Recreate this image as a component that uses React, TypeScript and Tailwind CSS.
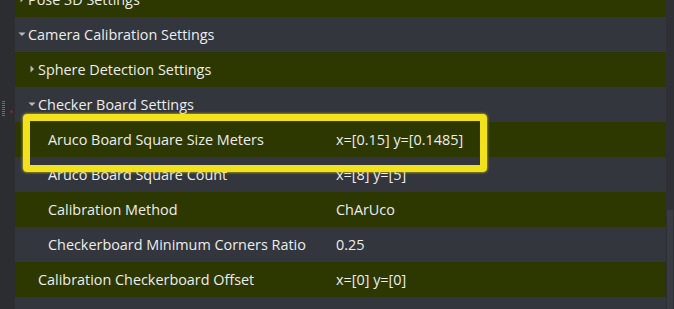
import React from "react";

type Row = {
  label: string;
  value?: string;
  level: number;
  arrow?: "open" | "closed";
  tone: "green" | "gray";
};

const rows: Row[] = [
  { label: "Pose 3D Settings", level: 0, arrow: "closed", tone: "green" },
  { label: "Camera Calibration Settings", level: 0, arrow: "open", tone: "gray" },
  { label: "Sphere Detection Settings", level: 1, arrow: "closed", tone: "green" },
  { label: "Checker Board Settings", level: 1, arrow: "open", tone: "gray" },
  { label: "Aruco Board Square Size Meters", value: "x=[0.15] y=[0.1485]", level: 2, tone: "green" },
  { label: "Aruco Board Square Count", value: "x=[8] y=[5]", level: 2, tone: "gray" },
  { label: "Calibration Method", value: "ChArUco", level: 2, tone: "green" },
  { label: "Checkerboard Minimum Corners Ratio", value: "0.25", level: 2, tone: "gray" },
  { label: "Calibration Checkerboard Offset", value: "x=[0] y=[0]", level: 1, tone: "green" },
  { label: "Initial Intrinsics", level: 1, tone: "gray" },
];

const padByLevel = ["pl-[2px]", "pl-[12px]", "pl-[22px]"];

const Arrow = ({ kind }: { kind: "open" | "closed" }) =>
  kind === "open" ? (
    <svg width="10" height="10" viewBox="0 0 10 10" className="shrink-0">
      <path d="M1.5 3.5 L8.5 3.5 L5 7 Z" fill="#b9bbbe" />
    </svg>
  ) : (
    <svg width="10" height="10" viewBox="0 0 10 10" className="shrink-0">
      <path d="M3.5 1.5 L7 5 L3.5 8.5 Z" fill="#b9bbbe" />
    </svg>
  );

const App: React.FC = () => {
  return (
    <div
      className="relative w-[674px] h-[309px] overflow-hidden bg-[#2c2e33] flex"
      style={{ fontFamily: '"Open Sans", "Noto Sans", sans-serif' }}
    >
      {/* Left gutter with drag handle */}
      <div className="w-[15px] shrink-0 bg-[#2b2d31] relative">
        <svg width="6" height="18" className="absolute left-[1px] top-[100px]">
          {[0, 1, 2, 3, 4, 5, 6, 7].map((i) => (
            <rect key={i} x="1" y={i * 2 + 1} width="3" height="1" fill="#6a6d72" />
          ))}
        </svg>
        <div className="absolute left-[10px] top-[110px] w-[3px] h-[3px] rounded-full bg-[#7a2a28]" />
      </div>

      {/* Property tree */}
      <div className="w-[651px] shrink-0 flex flex-col -mt-[18px]">
        {rows.map((row) => (
          <div
            key={row.label}
            className={`h-[35px] shrink-0 flex items-center text-[14.4px] text-[#eceded] ${
              row.tone === "green" ? "bg-[#2d3700]" : "bg-[#33363d]"
            }`}
          >
            <div className={`w-[321px] shrink-0 flex items-center gap-[1px] ${padByLevel[row.level]}`}>
              {row.arrow ? <Arrow kind={row.arrow} /> : <div className="w-[10px] shrink-0" />}
              <span className="whitespace-nowrap">{row.label}</span>
            </div>
            {row.value && <span className="whitespace-nowrap">{row.value}</span>}
          </div>
        ))}
      </div>

      {/* Scrollbar */}
      <div className="w-[8px] shrink-0 bg-[#2e3035] flex flex-col">
        <div className="flex-1" />
        <div className="h-[99px] mx-[1px] bg-[#383b41]" />
      </div>

      {/* Highlight box */}
      <div className="absolute left-[23px] top-[114px] w-[464px] h-[58px] rounded-[4px] border-[7px] border-[#f2e21c] shadow-[0_0_3px_#e8d81a]" />
    </div>
  );
};

export default App;
